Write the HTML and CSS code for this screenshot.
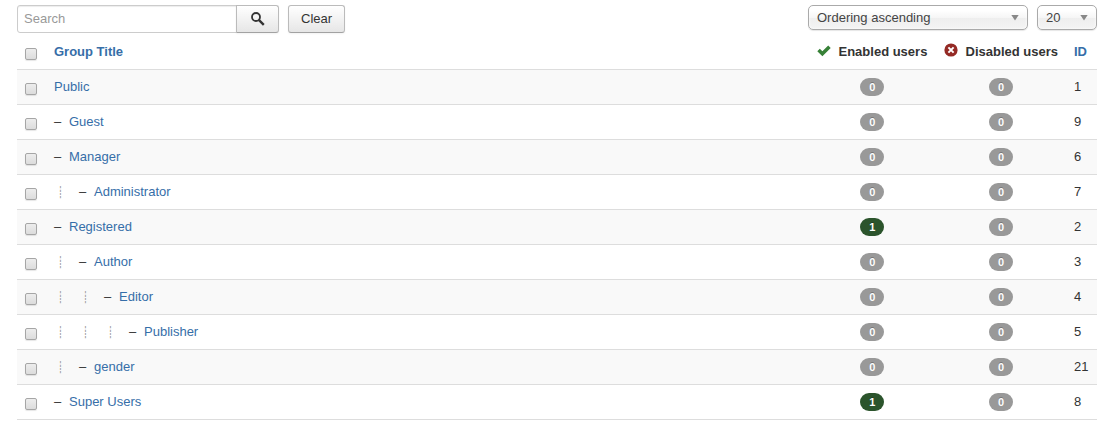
FILE: index.html
```html
<!DOCTYPE html>
<html lang="en">
<head>
  <meta charset="UTF-8">
  <meta name="viewport" content="width=device-width, initial-scale=1.0">
  <title>User Groups</title>
  <link rel="stylesheet" href="styles.css">
</head>
<body>
  <form class="toolbar">
    <div class="search">
      <input type="text" class="search-input" placeholder="Search" aria-label="Search">
      <button type="button" class="btn btn-search" aria-label="Search groups">
        <svg width="14" height="14" viewBox="0 0 14 14">
          <circle cx="5" cy="5" r="4" fill="none" stroke="#333" stroke-width="1.8"/>
          <path d="M7.8 7.8l5 5" stroke="#333" stroke-width="2.4"/>
        </svg>
      </button>
    </div>
    <button type="button" class="btn btn-clear">Clear</button>
    <div class="filters">
      <div class="select select-order">
        <select aria-label="Ordering">
          <option>Ordering ascending</option>
          <option>Ordering descending</option>
        </select>
      </div>
      <div class="select select-limit">
        <select aria-label="Items per page">
          <option>20</option>
          <option>50</option>
          <option>100</option>
        </select>
      </div>
    </div>
  </form>

  <table class="groups">
    <thead>
      <tr>
        <th class="col-check"><input type="checkbox" aria-label="Check all"></th>
        <th><a href="#">Group Title</a></th>
        <th class="col-count">
          <svg class="icon" width="14" height="12" viewBox="0 0 14 12"><path d="M0.3 6.3l2.5-2.5 2.6 2.5 5.8-5.8 2.5 2.5-8.3 8.3z" fill="#378137"/></svg>
          Enabled users
        </th>
        <th class="col-count">
          <svg class="icon" width="14" height="14" viewBox="0 0 14 14"><circle cx="7" cy="7" r="6.6" fill="#942a25"/><path d="M4.4 4.4l5.2 5.2M9.6 4.4l-5.2 5.2" stroke="#fff" stroke-width="2"/></svg>
          Disabled users
        </th>
        <th class="col-id"><a href="#">ID</a></th>
      </tr>
    </thead>
    <tbody>
      <tr>
        <td><input type="checkbox" aria-label="Public"></td>
        <td><a href="#">Public</a></td>
        <td class="count"><span class="badge">0</span></td>
        <td class="count"><span class="badge">0</span></td>
        <td>1</td>
      </tr>
      <tr>
        <td><input type="checkbox" aria-label="Guest"></td>
        <td><span class="dash">–</span><a href="#">Guest</a></td>
        <td class="count"><span class="badge">0</span></td>
        <td class="count"><span class="badge">0</span></td>
        <td>9</td>
      </tr>
      <tr>
        <td><input type="checkbox" aria-label="Manager"></td>
        <td><span class="dash">–</span><a href="#">Manager</a></td>
        <td class="count"><span class="badge">0</span></td>
        <td class="count"><span class="badge">0</span></td>
        <td>6</td>
      </tr>
      <tr>
        <td><input type="checkbox" aria-label="Administrator"></td>
        <td><span class="guide">┊</span><span class="dash">–</span><a href="#">Administrator</a></td>
        <td class="count"><span class="badge">0</span></td>
        <td class="count"><span class="badge">0</span></td>
        <td>7</td>
      </tr>
      <tr>
        <td><input type="checkbox" aria-label="Registered"></td>
        <td><span class="dash">–</span><a href="#">Registered</a></td>
        <td class="count"><span class="badge badge-success">1</span></td>
        <td class="count"><span class="badge">0</span></td>
        <td>2</td>
      </tr>
      <tr>
        <td><input type="checkbox" aria-label="Author"></td>
        <td><span class="guide">┊</span><span class="dash">–</span><a href="#">Author</a></td>
        <td class="count"><span class="badge">0</span></td>
        <td class="count"><span class="badge">0</span></td>
        <td>3</td>
      </tr>
      <tr>
        <td><input type="checkbox" aria-label="Editor"></td>
        <td><span class="guide">┊</span><span class="guide">┊</span><span class="dash">–</span><a href="#">Editor</a></td>
        <td class="count"><span class="badge">0</span></td>
        <td class="count"><span class="badge">0</span></td>
        <td>4</td>
      </tr>
      <tr>
        <td><input type="checkbox" aria-label="Publisher"></td>
        <td><span class="guide">┊</span><span class="guide">┊</span><span class="guide">┊</span><span class="dash">–</span><a href="#">Publisher</a></td>
        <td class="count"><span class="badge">0</span></td>
        <td class="count"><span class="badge">0</span></td>
        <td>5</td>
      </tr>
      <tr>
        <td><input type="checkbox" aria-label="gender"></td>
        <td><span class="guide">┊</span><span class="dash">–</span><a href="#">gender</a></td>
        <td class="count"><span class="badge">0</span></td>
        <td class="count"><span class="badge">0</span></td>
        <td>21</td>
      </tr>
      <tr>
        <td><input type="checkbox" aria-label="Super Users"></td>
        <td><span class="dash">–</span><a href="#">Super Users</a></td>
        <td class="count"><span class="badge badge-success">1</span></td>
        <td class="count"><span class="badge">0</span></td>
        <td>8</td>
      </tr>
    </tbody>
  </table>
</body>
</html>
```
FILE: styles.css
```css
* {
  box-sizing: border-box;
}

body {
  margin: 0;
  padding: 5px 15px 0 17px;
  background-color: #fff;
  color: #333;
  font-family: "Liberation Sans", Arial, sans-serif;
  font-size: 13px;
  line-height: 18px;
}

a {
  color: #366ea8;
  text-decoration: none;
}

a:hover {
  text-decoration: underline;
}

/* search and filters */
.toolbar {
  display: flex;
  align-items: flex-start;
  gap: 9px;
}

.search {
  display: flex;
}

.search-input {
  width: 220px;
  height: 28px;
  margin: 0;
  padding: 3px 6px 5px;
  border: 1px solid #ccc;
  border-radius: 3px 0 0 3px;
  box-shadow: inset 0 1px 1px rgba(0, 0, 0, 0.075);
  color: #555;
  font: inherit;
}

.search-input::placeholder {
  color: #999;
}

.btn {
  height: 28px;
  padding: 4px 12px;
  border: 1px solid #bbb;
  border-bottom-color: #a2a2a2;
  border-radius: 3px;
  background: linear-gradient(#fff, #e6e6e6);
  box-shadow: inset 0 1px 0 rgba(255, 255, 255, 0.2), 0 1px 2px rgba(0, 0, 0, 0.05);
  color: #333;
  font: inherit;
  cursor: pointer;
}

.btn-search {
  width: 43px;
  margin-left: -1px;
  border-radius: 0 3px 3px 0;
}

.btn-search svg {
  display: block;
  margin: 0 auto;
}

.filters {
  display: flex;
  gap: 9px;
  margin-left: auto;
}

.select {
  display: grid;
  align-items: center;
}

.select select,
.select::after {
  grid-area: 1 / 1;
}

.select select {
  width: 100%;
  height: 25px;
  padding: 0 8px;
  appearance: none;
  border: 1px solid #aaa;
  border-radius: 5px;
  background: linear-gradient(#fff 20%, #f6f6f6 50%, #eee 52%, #f4f4f4 100%);
  box-shadow: inset 0 0 3px #fff, 0 1px 1px rgba(0, 0, 0, 0.1);
  color: #444;
  font: inherit;
}

.select::after {
  content: "";
  justify-self: end;
  width: 8px;
  height: 6px;
  margin-right: 9px;
  background-color: #888;
  clip-path: polygon(0 0, 100% 0, 50% 100%);
  pointer-events: none;
}

.select-order {
  width: 220px;
}

.select-limit {
  width: 60px;
}

/* group list */
.groups {
  width: 100%;
  margin-top: 2px;
  border-collapse: separate;
  border-spacing: 0;
}

.groups th,
.groups td {
  height: 35px;
  padding: 8px;
  border-bottom: 1px solid #ddd;
  line-height: 18px;
  text-align: left;
  vertical-align: top;
  white-space: nowrap;
}

.groups tbody tr:nth-child(odd) {
  background-color: #f9f9f9;
}

.groups .col-check {
  width: 29px;
}

.groups .col-count {
  width: 127px;
}

.groups .col-id {
  width: 31px;
}

.groups .count {
  text-align: center;
}

.groups input {
  display: block;
  width: 12px;
  height: 12px;
  margin: 5px 0 0;
  appearance: none;
  border: 1px solid #a6a6a6;
  border-radius: 2px;
  background: linear-gradient(#ededed, #dcdcdc);
  box-shadow: 0 1px 1px rgba(0, 0, 0, 0.1);
}

.groups input:checked {
  background: #3071a9;
}

.icon {
  margin-right: 4px;
  vertical-align: -1px;
}

.dash,
.guide {
  display: inline-block;
}

.dash {
  width: 15px;
}

.guide {
  width: 25px;
  padding-left: 3px;
  color: #999;
  font-family: "DejaVu Sans Mono", monospace;
  font-size: 11px;
  line-height: 16px;
}

.badge {
  display: inline-block;
  padding: 2px 9px;
  border-radius: 9px;
  background-color: #999;
  color: #fff;
  font-size: 11px;
  font-weight: bold;
  line-height: 14px;
  text-shadow: 0 -1px 0 rgba(0, 0, 0, 0.25);
}

.badge-success {
  background-color: #2b542c;
}
```
